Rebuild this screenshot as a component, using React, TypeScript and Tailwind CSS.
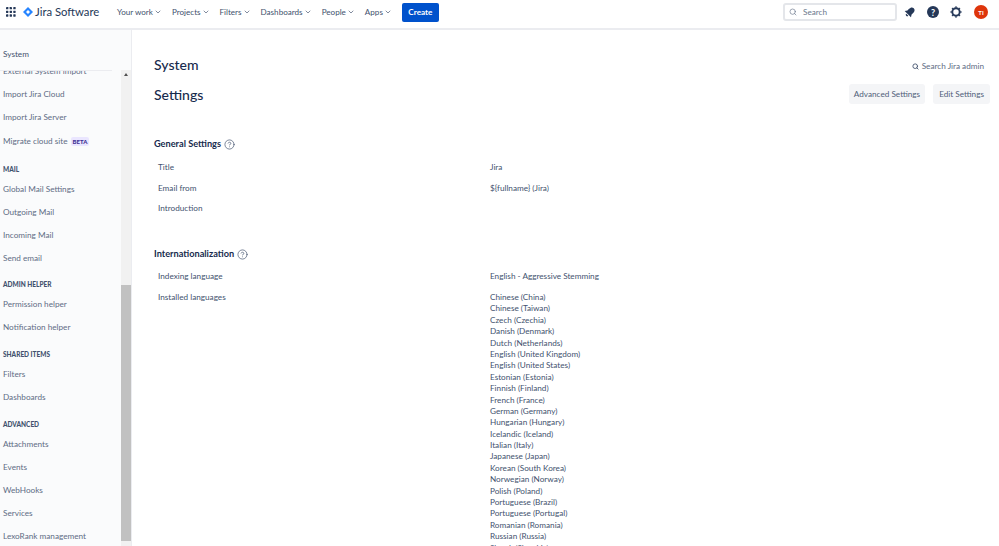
import { ChevronDown, Search, HelpCircle } from "lucide-react";

const navItems = ["Your work", "Projects", "Filters", "Dashboards", "People", "Apps"];

const groups = [
  { head: "MAIL", space: "mt-[9px]", items: ["Global Mail Settings", "Outgoing Mail", "Incoming Mail", "Send email"] },
  { head: "ADMIN HELPER", space: "mt-[7px]", items: ["Permission helper", "Notification helper"] },
  { head: "SHARED ITEMS", space: "mt-[8px]", items: ["Filters", "Dashboards"] },
  { head: "ADVANCED", space: "mt-[8px]", items: ["Attachments", "Events", "WebHooks", "Services", "LexoRank management"] },
];

const languages = [
  "Chinese (China)",
  "Chinese (Taiwan)",
  "Czech (Czechia)",
  "Danish (Denmark)",
  "Dutch (Netherlands)",
  "English (United Kingdom)",
  "English (United States)",
  "Estonian (Estonia)",
  "Finnish (Finland)",
  "French (France)",
  "German (Germany)",
  "Hungarian (Hungary)",
  "Icelandic (Iceland)",
  "Italian (Italy)",
  "Japanese (Japan)",
  "Korean (South Korea)",
  "Norwegian (Norway)",
  "Polish (Poland)",
  "Portuguese (Brazil)",
  "Portuguese (Portugal)",
  "Romanian (Romania)",
  "Russian (Russia)",
  "Slovak (Slovakia)",
];

function Row({ label, children }: { label: string; children?: React.ReactNode }) {
  return (
    <div className="flex pl-1">
      <div className="w-[332px] shrink-0 leading-[12px]">{label}</div>
      <div className="leading-[12px]">{children}</div>
    </div>
  );
}

function Help() {
  return <HelpCircle className="w-[11px] h-[11px] text-[#42526e]" strokeWidth={1.5} />;
}

export default function App() {
  return (
    <div className="w-[999px] h-[546px] overflow-hidden flex flex-col bg-white text-[#172b4d] text-[8.2px] font-['Lato',sans-serif]">
      <header className="h-[30px] shrink-0 flex items-center border-b-2 border-[#ebecf0] pl-[6px] pr-[11px] pb-[4px]">
        <svg viewBox="0 0 11 11" className="w-[10px] h-[10px] fill-[#253858] mr-[7px]">
          {[0, 4, 8].map((y) =>
            [0, 4, 8].map((x) => <rect key={`${x}-${y}`} x={x} y={y} width="2.6" height="2.6" rx="0.5" />)
          )}
        </svg>
        <svg viewBox="0 0 12 12" className="w-[10px] h-[10px] mr-[2px]">
          <path d="M6 0 12 6 6 12 0 6Z" fill="#2684ff" />
          <path d="M6 3.600 8.400 6 6 8.400 3.600 6Z" fill="#ffffff" />
        </svg>
        <span className="text-[11.3px] text-[#253858] w-[82px] whitespace-nowrap">Jira Software</span>
        <nav className="flex items-center gap-[10px] text-[#42526e] text-[8.1px]">
          {navItems.map((n) => (
            <span key={n} className="flex items-center whitespace-nowrap">
              {n}
              <ChevronDown className="w-[8px] h-[8px] ml-[1px]" strokeWidth={2} />
            </span>
          ))}
        </nav>
        <button className="ml-[10px] w-[37px] h-[19px] rounded-[2px] bg-[#0052cc] text-white font-bold">Create</button>
        <div className="ml-auto flex items-center">
          <div className="w-[114px] h-[18px] rounded-[3px] border-2 border-[#e4e6ea] flex items-center pl-[4px] text-[#6b778c]">
            <Search className="w-[8px] h-[8px] mr-[6px]" strokeWidth={2} />
            Search
          </div>
          <svg viewBox="0 0 14 14" className="w-[12px] h-[12px] fill-[#253858] ml-[7px]">
            <g transform="rotate(45 7 7)">
              <path d="M7 .8C4.400.8 3.600 3 3.600 5.200V7.800L1.800 10.600H12.200L10.400 7.800V5.200C10.400 3 9.600.8 7 .8Z" />
              <path d="M5.200 11.500h3.600a1.800 1.800 0 0 1-3.600 0Z" />
            </g>
          </svg>
          <div className="ml-[11px] w-[12px] h-[12px] rounded-full bg-[#253858] text-white flex items-center justify-center text-[9px] font-bold leading-none">?</div>
          <svg viewBox="0 0 12 12" className="ml-[11px] w-[12px] h-[12px] text-[#253858]" fill="none" stroke="currentColor">
            <circle cx="6" cy="6" r="3.700" strokeWidth="1.900" />
            <path d="M6 .6v1M6 10.400v1M.6 6h1M10.400 6h1M2.200 2.200l.8.8M9 9l.8.8M2.200 9.800l.8-.8M9 3l.8-.8" strokeWidth="1.900" />
          </svg>
          <div className="ml-[12px] w-[14px] h-[14px] rounded-full bg-[#de350b] text-white flex items-center justify-center text-[6px] font-bold">TI</div>
        </div>
      </header>

      <div className="flex flex-1 min-h-0">
        <aside className="w-[132px] shrink-0 flex flex-col bg-[#fafbfc] border-r border-[#ebecf0] text-[#5e6c84]">
          <div className="h-[40px] shrink-0 flex items-end pb-[10px] pl-[3px] text-[#42526e]">System</div>
          <div className="flex flex-1 min-h-0">
            <div className="w-[121px] overflow-hidden pl-[3px] relative">
              <div className="absolute top-0 left-0 w-[112px] h-px bg-[#ebecf0] z-10" />
              <div className="-mt-[10px] h-[23px] leading-[23px] whitespace-nowrap">External System import</div>
              <div className="h-[23px] leading-[23px] whitespace-nowrap">Import Jira Cloud</div>
              <div className="h-[23px] leading-[23px] whitespace-nowrap">Import Jira Server</div>
              <div className="mt-px h-[23px] flex items-center whitespace-nowrap">
                Migrate cloud site
                <span className="ml-[3px] px-[2px] h-[9px] rounded-[2px] bg-[#eae6ff] text-[#403294] text-[6px] font-black leading-[9px]">BETA</span>
              </div>
              {groups.map((g) => (
                <div key={g.head}>
                  <div className={`${g.space} h-[16px] leading-[16px] text-[6.5px] font-black text-[#42526e]`}>{g.head}</div>
                  {g.items.map((i) => (
                    <div key={i} className="h-[23px] leading-[23px] whitespace-nowrap">{i}</div>
                  ))}
                </div>
              ))}
            </div>
            <div className="w-[10px] bg-[#f1f1f1] flex flex-col items-center">
              <div className="mt-[3px] w-0 h-0 border-x-[2.5px] border-x-transparent border-b-[3px] border-b-[#505050]" />
              <div className="mt-auto mb-[5px] w-full h-[256px] bg-[#c1c1c1]" />
            </div>
          </div>
        </aside>

        <main className="flex-1 min-w-0 pl-[22px] pr-[9px] overflow-hidden">
          <div className="flex justify-between items-center mt-[25px]">
            <h1 className="text-[14px] font-medium leading-[20px]">System</h1>
            <div className="flex items-center text-[#5e6c84] mr-[6px] mt-[3px]">
              <Search className="w-[7px] h-[7px] mr-[3px] text-[#42526e]" strokeWidth={3} />
              Search Jira admin
            </div>
          </div>
          <div className="flex justify-between items-start mt-[8px]">
            <h2 className="mt-px text-[14px] font-medium leading-[22px]">Settings</h2>
            <div className="mt-px flex gap-[8px] text-[#505f79]">
              <span className="h-[20px] px-[5px] flex items-center rounded-[3px] bg-[#f4f5f7]">Advanced Settings</span>
              <span className="h-[20px] px-[6px] flex items-center rounded-[3px] bg-[#f4f5f7]">Edit Settings</span>
            </div>
          </div>

          <h3 className="mt-[31px] flex items-center gap-[3px] text-[9.2px] font-bold leading-[14px]">
            General Settings <Help />
          </h3>
          <div className="mt-[10px] flex flex-col gap-[8.500px] text-[#42526e]">
            <Row label="Title">Jira</Row>
            <Row label="Email from">{"${fullname} (Jira)"}</Row>
            <Row label="Introduction" />
          </div>

          <h3 className="mt-[33px] flex items-center gap-[3px] text-[9.2px] font-bold leading-[14px]">
            Internationalization <Help />
          </h3>
          <div className="mt-[9px] flex flex-col gap-[9px] text-[#42526e]">
            <Row label="Indexing language">English - Aggressive Stemming</Row>
            <Row label="Installed languages">
              {languages.map((l) => (
                <div key={l} className="h-[11.4px] leading-[11.4px] whitespace-nowrap first:mt-px">{l}</div>
              ))}
            </Row>
          </div>
        </main>
      </div>
    </div>
  );
}
